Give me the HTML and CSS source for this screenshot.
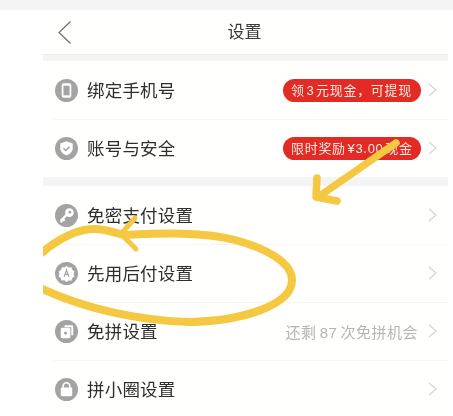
FILE: index.html
```html
<!DOCTYPE html>
<html lang="zh-CN">
<head>
<meta charset="utf-8">
<title>设置</title>
<link rel="stylesheet" href="styles.css">
</head>
<body>
<div class="page">
<div class="topband"></div>
<main class="phone">
  <header class="nav">
    <svg class="back" viewBox="0 0 13 23"><path d="M12.500 .5 1 11.500 12.500 22.500"/></svg>
    <h1>设置</h1>
  </header>
  <div class="gap gap-first"></div>
  <section class="group">
    <div class="row">
      <svg class="ico" viewBox="0 0 24 24"><circle cx="12" cy="12" r="12"/><rect x="7" y="4.500" width="10" height="15" rx="2" fill="#fff"/><rect x="8.800" y="7" width="6.400" height="10" fill="#a3a3a3"/></svg>
      <span class="label">绑定手机号</span>
      <span class="badge">领 3 元现金，可提现</span>
      <svg class="chev" viewBox="0 0 9 14"><path d="M1 1l7 6-7 6"/></svg>
    </div>
    <div class="row">
      <svg class="ico" viewBox="0 0 24 24"><circle cx="12" cy="12" r="12"/><path d="M12 4.500l6.500 2.300v5c0 3.500-2.700 6-6.500 7.500-3.800-1.500-6.500-4-6.500-7.500v-5z" fill="#fff"/><path d="M8.800 11.800l2.400 2.300 4-4" fill="none" stroke="#a3a3a3" stroke-width="1.500"/></svg>
      <span class="label">账号与安全</span>
      <span class="badge">限时奖励 ¥3.00 现金</span>
      <svg class="chev" viewBox="0 0 9 14"><path d="M1 1l7 6-7 6"/></svg>
    </div>
  </section>
  <div class="gap"></div>
  <section class="group">
    <div class="row">
      <svg class="ico" viewBox="0 0 24 24"><circle cx="12" cy="12" r="12"/><circle cx="15" cy="9" r="4.500" fill="#fff"/><circle cx="15.500" cy="8.500" r="1.400" fill="#a3a3a3"/><path d="M12.500 11 6 17.500M8 15.500l2 2M6 17.500l1.500 1.500" stroke="#fff" stroke-width="2.400" fill="none"/></svg>
      <span class="label">免密支付设置</span>
      <svg class="chev" viewBox="0 0 9 14"><path d="M1 1l7 6-7 6"/></svg>
    </div>
    <div class="row">
      <svg class="ico" viewBox="0 0 24 24"><circle cx="12" cy="12" r="12"/><path d="M12 4l2.300 1.700 2.800-.2.900 2.700 2.300 1.600-.9 2.700.9 2.700-2.300 1.600-.9 2.700-2.800-.2L12 20.800l-2.300-1.700-2.800.2-.9-2.700-2.300-1.600.9-2.700L4 9.800l2.300-1.600.9-2.700 2.800.2z" fill="#fff"/><path d="M9.500 15.500 12 8.500l2.500 7M10.400 13h3.200" stroke="#a3a3a3" stroke-width="1.300" fill="none"/></svg>
      <span class="label">先用后付设置</span>
      <svg class="chev" viewBox="0 0 9 14"><path d="M1 1l7 6-7 6"/></svg>
    </div>
    <div class="row">
      <svg class="ico" viewBox="0 0 24 24"><circle cx="12" cy="12" r="12"/><path d="M10 5.500h7.500a1.500 1.500 0 0 1 1.500 1.500v9h-2V7.500h-7z" fill="#fff"/><rect x="6" y="8" width="10" height="11" rx="1.500" fill="#fff"/><circle cx="11" cy="13.500" r="1.600" fill="#a3a3a3"/></svg>
      <span class="label">免拼设置</span>
      <span class="note">还剩 87 次免拼机会</span>
      <svg class="chev" viewBox="0 0 9 14"><path d="M1 1l7 6-7 6"/></svg>
    </div>
    <div class="row">
      <svg class="ico" viewBox="0 0 24 24"><circle cx="12" cy="12" r="12"/><rect x="6" y="10" width="12" height="9" rx="1.500" fill="#fff"/><path d="M8.500 11V8.500a3.500 3.500 0 0 1 7 0V11" fill="none" stroke="#fff" stroke-width="1.700"/></svg>
      <span class="label">拼小圈设置</span>
      <svg class="chev" viewBox="0 0 9 14"><path d="M1 1l7 6-7 6"/></svg>
    </div>
  </section>
</main>
<svg class="scribble" viewBox="43 0 410 416">
  <g fill="none" stroke="#f5c842" stroke-linecap="round" stroke-linejoin="round">
    <path class="arrow" d="M396 143 321 195M317 178 316 197 337 201"/>
    <path class="arrow-head" d="M135 218 121 234 136 249"/>
    <path class="ring" stroke-linecap="butt" d="M38 256C55 241 75 229 95 229 105 229 115 233 125 235 165 233 205 232 235 240 265 248 292 262 292 280 292 306 240 321 190 322 140 321 85 309 38 287"/>
  </g>
</svg>
</div>
</body>
</html>
```

FILE: styles.css
```css
* { box-sizing: border-box; }
html, body { margin: 0; padding: 0; background: #fff; }
body { width: 453px; height: 416px; overflow: hidden; }
.page {
  width: 453px;
  height: 416px;
  overflow: hidden;
  position: relative;
  background: #fff;
  font-family: "Liberation Sans", "Noto Sans CJK SC", sans-serif;
  color: #2f2f2f;
  filter: blur(.35px);
}
.topband { height: 10px; background: #f4f4f4; }
.phone { margin-left: 43px; width: 405px; background: #fffffd; }
.nav {
  height: 45px;
  border-bottom: 1px solid #ececec;
  display: flex;
  align-items: center;
  justify-content: center;
  position: relative;
}
.nav h1 {
  margin: 0;
  font-size: 17px;
  font-weight: 400;
  line-height: 24px;
  color: #3a3a3a;
  transform: translate(-1px, .5px);
}
.back {
  position: absolute;
  left: 15px;
  top: 11px;
  width: 13px;
  height: 23px;
  fill: none;
  stroke: #666;
  stroke-width: 1.100;
}
.gap { height: 9px; background: #f4f4f4; }
.gap-first { height: 6px; }
.row {
  height: 58px;
  margin-left: 11px;
  padding-left: 1px;
  display: flex;
  align-items: center;
  padding-right: 11px;
  box-shadow: 0 1px 0 #f5f5f3;
}
.group .row:last-child { box-shadow: none; }
.ico { width: 23px; height: 23px; fill: #a3a3a3; flex: none; }
.label {
  margin-left: 9px;
  padding-bottom: 2px;
  font-size: 17.500px;
  letter-spacing: .2px;
  color: #2e2e2e;
  flex: 1;
}
.badge {
  width: 138px;
  height: 23px;
  line-height: 23px;
  border-radius: 12px;
  padding-left: 8px;
  background: #e22b24;
  color: #ffe9e2;
  font-size: 13px;
  letter-spacing: .7px;
  word-spacing: -2.600px;
  white-space: nowrap;
  overflow: hidden;
}
.note {
  font-size: 15px;
  letter-spacing: .5px;
  word-spacing: -1.500px;
  margin-right: 3px;
  color: #b5b5b5;
  white-space: nowrap;
}
.chev {
  width: 9px;
  height: 14px;
  margin-left: 7px;
  fill: none;
  stroke: #d4d4d4;
  stroke-width: 1.200;
  flex: none;
}
.scribble { position: absolute; left: 43px; top: 0; width: 410px; height: 416px; pointer-events: none; }
.arrow { stroke-width: 7.500; }
.arrow-head { stroke-width: 5; }
.ring { stroke-width: 8; }
```
